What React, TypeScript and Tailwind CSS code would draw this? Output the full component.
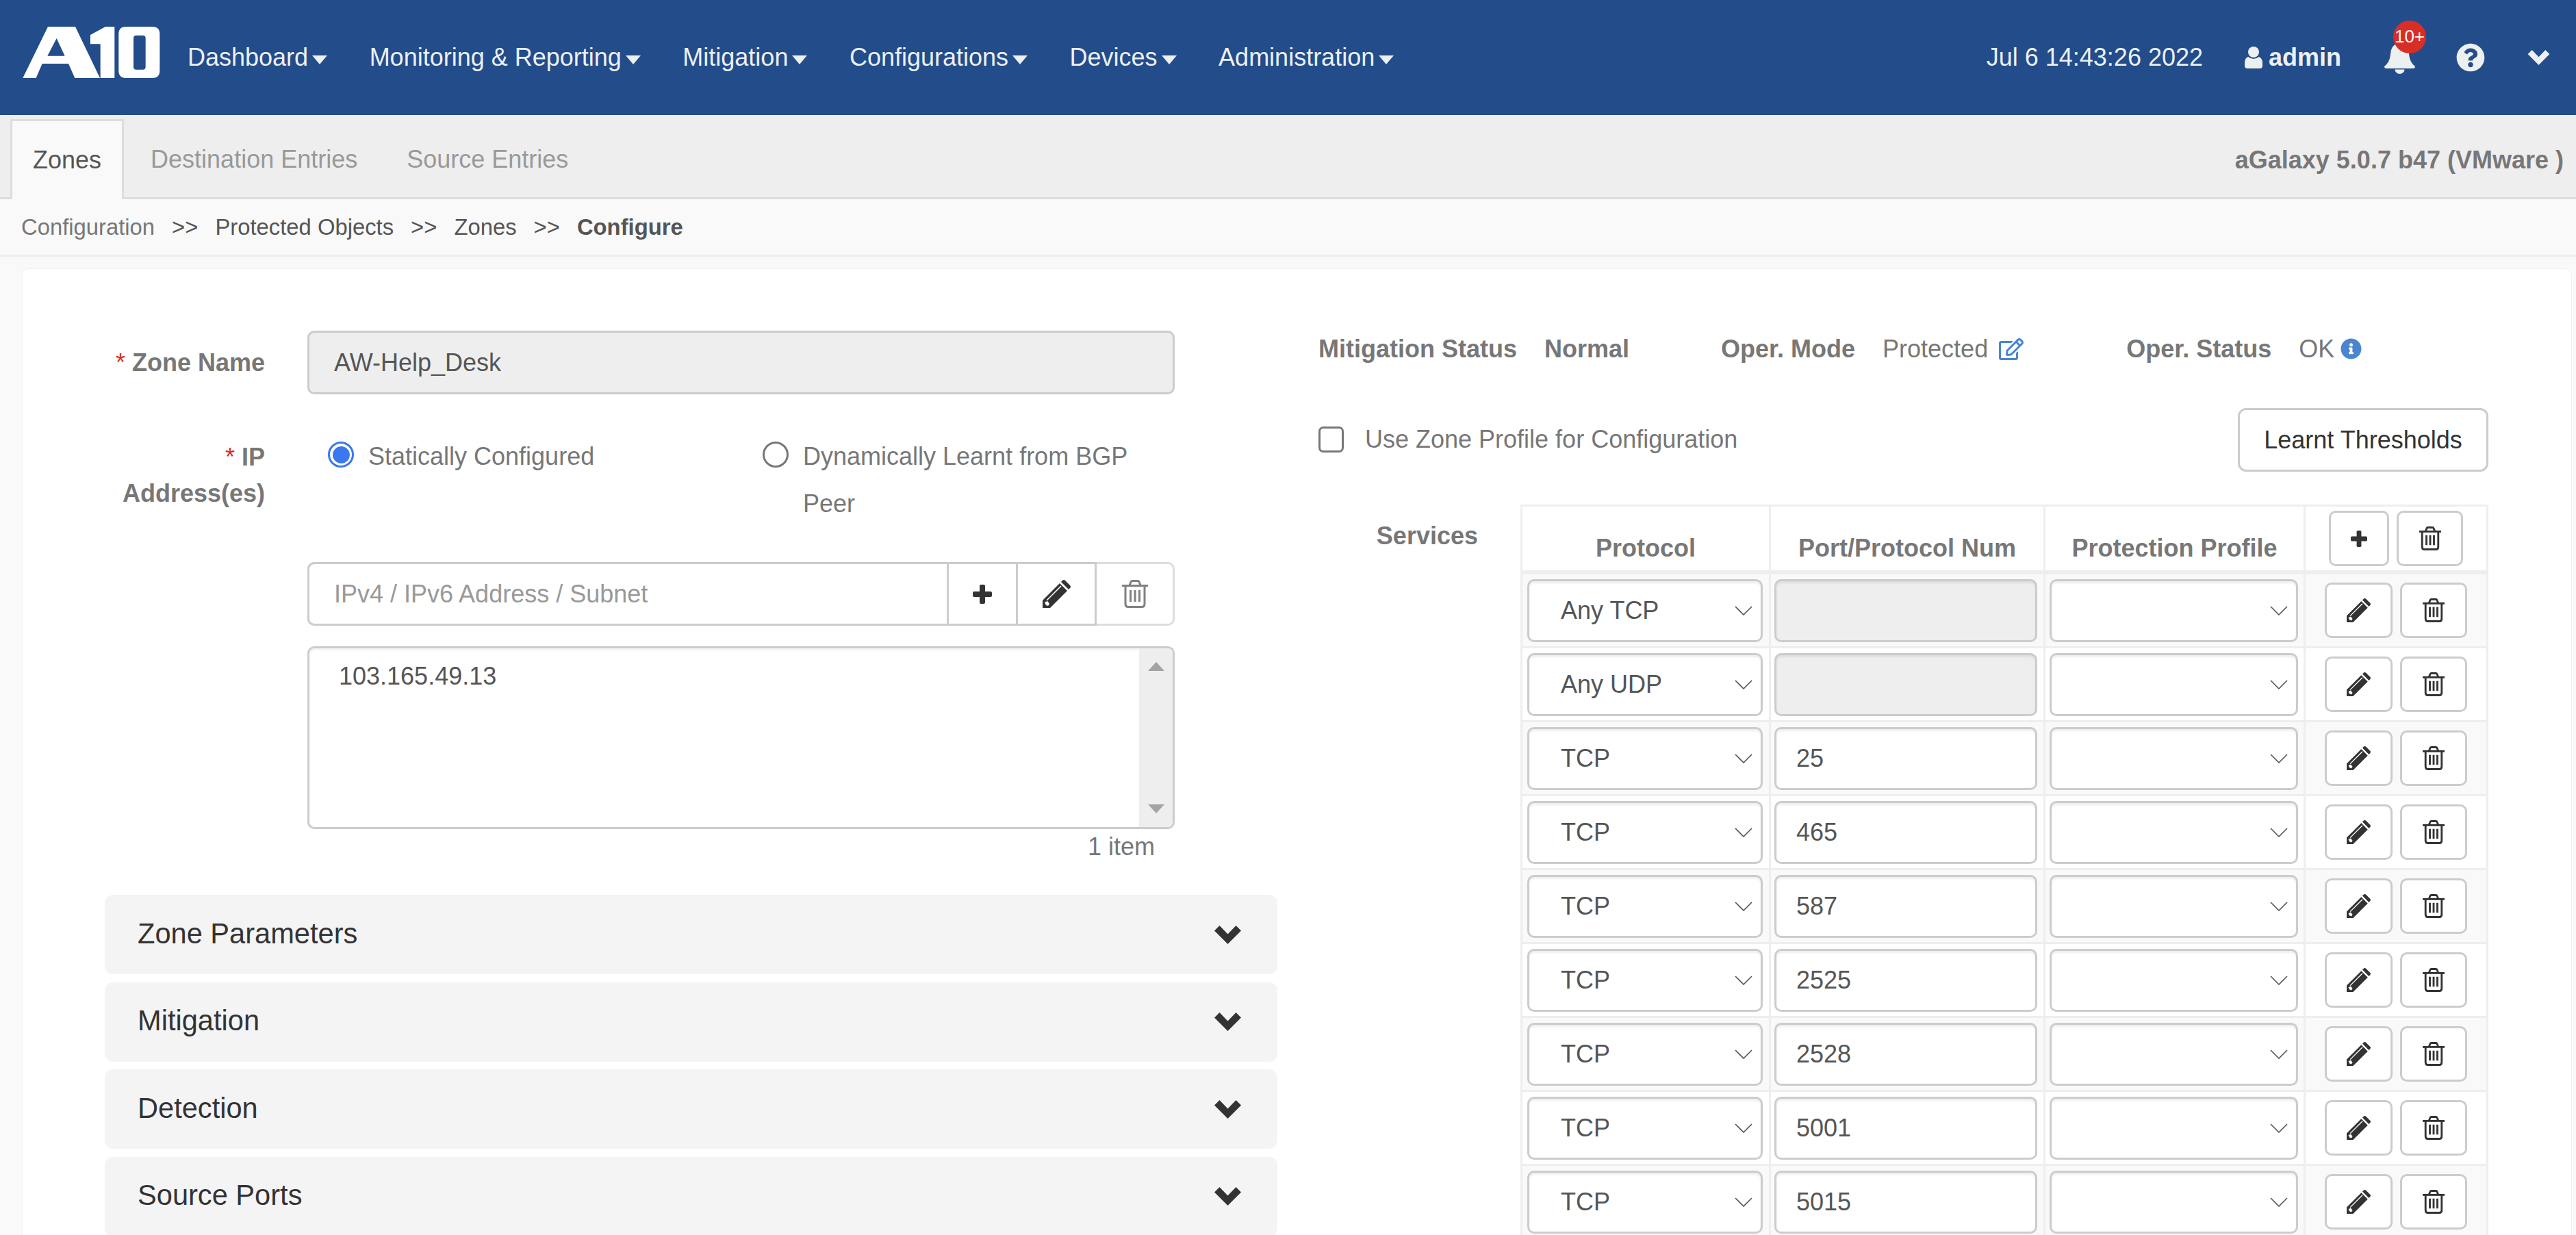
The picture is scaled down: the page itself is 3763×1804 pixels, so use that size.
import { FaInfoCircle, FaQuestionCircle, FaRegEdit } from 'react-icons/fa';

const NAV = ['Dashboard', 'Monitoring & Reporting', 'Mitigation', 'Configurations', 'Devices', 'Administration'];
const ACCORDIONS = ['Zone Parameters', 'Mitigation', 'Detection', 'Source Ports'];
const SERVICES = [
  { proto: 'Any TCP', port: null },
  { proto: 'Any UDP', port: null },
  { proto: 'TCP', port: '25' },
  { proto: 'TCP', port: '465' },
  { proto: 'TCP', port: '587' },
  { proto: 'TCP', port: '2525' },
  { proto: 'TCP', port: '2528' },
  { proto: 'TCP', port: '5001' },
  { proto: 'TCP', port: '5015' },
];

function Logo() {
  return (
    <svg viewBox="0 0 690 300" className="mb-[18px] h-[100px] w-[230px] shrink-0" fill="white">
      <path fillRule="evenodd" d="M40 267 150 42H270L378 267H268L240 204H125L98 267ZM188 93 148 170H224Z" />
      <path d="M336 78 402 42H442V267H380V118H336Z" />
      <path
        fillRule="evenodd"
        d="M492 42H608Q640 42 640 74V235Q640 267 608 267H492Q460 267 460 235V74Q460 42 492 42ZM537 80Q525 80 525 92V218Q525 230 537 230H566Q578 230 578 218V92Q578 80 566 80Z"
      />
    </svg>
  );
}

function UserIcon() {
  return (
    <svg viewBox="0 0 26 32" className="h-[32px] w-[26px]" fill="#ecf0f1">
      <circle cx="13" cy="8" r="8" />
      <path d="M5 15Q9 18 13 18T21 15Q26 17 26 24V28Q26 32 22 32H4Q0 32 0 28V24Q0 17 5 15Z" />
    </svg>
  );
}

function BellIcon() {
  return (
    <svg viewBox="0 0 45 45" className="h-[45px] w-[45px]" fill="#ecf0f1">
      <path d="M22.5 0Q35 1 36 16 37 28 45 34 45 37 42 37H3Q0 37 0 34 8 28 9 16 10 1 22.5 0Z" />
      <path d="M15.5 38.5A7 6.5 0 0 0 29.5 38.5Z" />
    </svg>
  );
}

function HeavyChevron({ className }: { className: string }) {
  return (
    <svg viewBox="0 0 39 27" className={className} fill="currentColor">
      <path d="M0 7.5 7.5 0 19.5 12.5 31.5 0 39 7.5 19.5 27Z" />
    </svg>
  );
}

function PlusIcon({ className }: { className: string }) {
  return (
    <svg viewBox="0 0 28 28" className={className} fill="#333">
      <rect x="10" y="0" width="8" height="28" rx="2" />
      <rect x="0" y="10" width="28" height="8" rx="2" />
    </svg>
  );
}

function PencilIcon({ className }: { className: string }) {
  return (
    <svg viewBox="0 0 41 41" className={className}>
      <path d="M0 30 25 5 36 16 11 41H0Z" fill="#333" />
      <path d="M27 3 29 1Q31-1 33 1L40 8Q42 10 40 12L38 14Z" fill="#333" />
      <path d="M6 30 27 9" stroke="white" strokeWidth="1.6" />
      <path d="M3 33 7 31 10 35 8 38 5 37Z" fill="white" />
    </svg>
  );
}

function TrashIcon({ className, color, stroke = 3 }: { className: string; color: string; stroke?: number }) {
  return (
    <svg viewBox="0 0 38 41" className={className} fill="none" stroke={color} strokeWidth={stroke}>
      <path d="M0 8.5H38" />
      <path d="M11 8 13 3Q13.6 1.5 15 1.5H23Q24.4 1.5 25 3L27 8" />
      <path d="M5 8V35Q5 39.5 9 39.5H29Q33 39.5 33 35V8" />
      <path d="M12.5 15V32M19 15V32M25.5 15V32" />
    </svg>
  );
}

function SelectChevron() {
  return (
    <svg viewBox="0 0 26 14" className="h-[14px] w-[26px]" fill="none" stroke="#555" strokeWidth="1.6">
      <path d="M1 1 13 13 25 1" />
    </svg>
  );
}

function Select({ value, width }: { value?: string; width: string }) {
  return (
    <div
      className={`flex h-[92px] items-center justify-between rounded-[10px] border-[3px] border-[#ccc] bg-white pl-[46px] pr-[12px] text-[36px] text-[#555] shadow-[inset_0_3px_3px_rgba(0,0,0,0.07)] ${width}`}
    >
      <span>{value}</span>
      <SelectChevron />
    </div>
  );
}

function IconButton({ width, children }: { width: string; children: React.ReactNode }) {
  return (
    <div className={`flex h-[81px] items-center justify-center rounded-[10px] border-[3px] border-[#ccc] bg-white ${width}`}>
      {children}
    </div>
  );
}

function ServiceRow({ proto, port, odd }: { proto: string; port: string | null; odd: boolean }) {
  return (
    <div
      className={`grid h-[108px] shrink-0 grid-cols-[363px_401px_380px_1fr] border-b-[3px] border-[#eee] ${odd ? 'bg-[#f9f9f9]' : 'bg-white'}`}
    >
      <div className="flex items-center border-l-[3px] border-[#eee] pl-[7px]">
        <Select value={proto} width="w-[344px]" />
      </div>
      <div className="flex items-center border-l-[3px] border-[#eee] pl-[5px]">
        <div
          className={`flex h-[92px] w-[384px] items-center rounded-[10px] border-[3px] border-[#ccc] pl-[29px] text-[36px] text-[#555] shadow-[inset_0_3px_3px_rgba(0,0,0,0.07)] ${port ? 'bg-white' : 'bg-[#eee]'}`}
        >
          {port}
        </div>
      </div>
      <div className="flex items-center border-l-[3px] border-[#eee] pl-[6px]">
        <Select width="w-[363px]" />
      </div>
      <div className="flex items-center gap-[11px] border-l-[3px] border-[#eee] pl-[28px]">
        <IconButton width="w-[99px]">
          <PencilIcon className="h-[35px] w-[35px]" />
        </IconButton>
        <IconButton width="w-[98px]">
          <TrashIcon className="h-[35px] w-[32px]" color="#333" stroke={3.4} />
        </IconButton>
      </div>
    </div>
  );
}

function Radio({ checked }: { checked?: boolean }) {
  return (
    <div
      className={`flex h-[38px] w-[38px] shrink-0 items-center justify-center rounded-full border-[3px] ${checked ? 'border-[#3b78f0]' : 'border-[#777]'}`}
    >
      {checked && <div className="h-[25px] w-[25px] rounded-full bg-[#3b78f0]" />}
    </div>
  );
}

export default function App() {
  return (
    <div className="flex h-[1804px] flex-col overflow-hidden bg-[#f9f9f9] font-['Liberation_Sans',Arial,sans-serif] text-[36px]">
      <header className="flex h-[168px] shrink-0 items-center bg-[#234c8b] pl-[20px] pr-[38px] text-[#ecf0f1]">
        <Logo />
        <nav className="ml-[24px] flex items-center gap-[61.5px]">
          {NAV.map((item) => (
            <div key={item} className="flex items-center gap-[6px]">
              <span>{item}</span>
              <span className="mt-[6px] h-0 w-0 border-x-[11.5px] border-t-[13px] border-x-transparent border-t-[#ecf0f1]" />
            </div>
          ))}
        </nav>
        <div className="ml-auto flex items-center">
          <span>Jul 6 14:43:26 2022</span>
          <span className="ml-[61px] mr-[9px] flex">
            <UserIcon />
          </span>
          <span className="font-bold">admin</span>
          <div className="relative ml-[63px] mt-[2px]">
            <BellIcon />
            <span className="absolute left-[13px] top-[-33px] flex h-[48px] w-[48px] items-center justify-center rounded-full bg-[#d92d27] text-[26px] text-white">
              10+
            </span>
          </div>
          <FaQuestionCircle className="ml-[60px] h-[42px] w-[42px]" />
          <HeavyChevron className="ml-[62px] h-[22px] w-[33px]" />
        </div>
      </header>

      <div className="flex h-[123px] shrink-0 items-end justify-between border-b-[3px] border-[#ddd] bg-[#eee] pl-[15px] pr-[18px]">
        <div className="flex items-end">
          <div className="relative -mb-[3px] flex h-[117px] items-center border-x-[3px] border-t-[3px] border-[#ddd] bg-[#f9f9f9] px-[30px] text-[#555]">
            <span>Zones</span>
          </div>
          <div className="flex h-[114px] items-center gap-[72px] pl-[39px] pt-[3px] text-[#999]">
            <span>Destination Entries</span>
            <span>Source Entries</span>
          </div>
        </div>
        <div className="flex h-[114px] items-center pt-[6px] font-bold text-[#777]">aGalaxy 5.0.7 b47 (VMware )</div>
      </div>

      <div className="flex h-[84px] shrink-0 items-center gap-[25px] border-b-[3px] border-[#eee] pl-[31px] text-[32.8px] text-[#555]">
        <span className="text-[#777]">Configuration</span>
        <span>&gt;&gt;</span>
        <span>Protected Objects</span>
        <span>&gt;&gt;</span>
        <span>Zones</span>
        <span>&gt;&gt;</span>
        <span className="font-bold">Configure</span>
      </div>

      <main className="ml-[32px] mr-[6px] mt-[17px] flex flex-1 rounded-t-[10px] border border-[#f0f1f5] bg-white pl-[120px]">
        <div className="w-[1713px] shrink-0 pt-[90px]">
          <div className="flex items-center">
            <div className="w-[234px] text-right font-bold text-[#777]">
              <span className="font-normal text-[#d9301f]">*</span> <span>Zone Name</span>
            </div>
            <div className="ml-[62px] flex h-[93px] w-[1267px] items-center rounded-[10px] border-[3px] border-[#ccc] bg-[#eee] pl-[36px] text-[#555]">
              AW-Help_Desk
            </div>
          </div>

          <div className="mt-[56px] flex">
            <div className="mt-[9px] w-[234px] text-right font-bold leading-[53px] text-[#777]">
              <div>
                <span className="font-normal text-[#d9301f]">*</span> <span>IP</span>
              </div>
              <div>Address(es)</div>
            </div>
            <div className="ml-[62px] flex w-[1267px] pl-[30px] leading-[69px] text-[#777]">
              <div className="flex w-[635px] items-start gap-[21px]">
                <div className="mt-[13px]">
                  <Radio checked />
                </div>
                <span>Statically Configured</span>
              </div>
              <div className="flex w-[560px] items-start gap-[21px]">
                <div className="mt-[13px]">
                  <Radio />
                </div>
                <span>Dynamically Learnt from BGP Peer</span>
              </div>
            </div>
          </div>

          <div className="ml-[296px] mt-[51px] flex h-[93px] w-[1267px] rounded-[10px] border-[3px] border-[#ddd] bg-white">
            <div className="-my-[3px] -ml-[3px] flex w-[937px] items-center rounded-l-[10px] border-[3px] border-[#ccc] pl-[36px] text-[#999]">
              IPv4 / IPv6 Address / Subnet
            </div>
            <div className="-my-[3px] flex w-[101px] items-center justify-center border-y-[3px] border-r-[3px] border-[#ccc]">
              <PlusIcon className="h-[28px] w-[28px]" />
            </div>
            <div className="-my-[3px] flex w-[115px] items-center justify-center border-y-[3px] border-r-[3px] border-[#ccc]">
              <PencilIcon className="h-[41px] w-[41px]" />
            </div>
            <div className="flex flex-1 items-center justify-center">
              <TrashIcon className="h-[41px] w-[38px]" color="#808080" />
            </div>
          </div>

          <div className="ml-[296px] mt-[30px] flex h-[267px] w-[1267px] overflow-hidden rounded-[10px] border-[3px] border-[#ccc] bg-white shadow-[inset_0_3px_3px_rgba(0,0,0,0.05)]">
            <div className="flex-1 pl-[43px] pt-[14px] text-[#555]">103.165.49.13</div>
            <div className="flex w-[49px] flex-col items-center justify-between bg-[#eee] pb-[20px] pt-[20px]">
              <span className="h-0 w-0 border-x-[12px] border-b-[13px] border-x-transparent border-b-[#a3a3a3]" />
              <span className="h-0 w-0 border-x-[12px] border-t-[13px] border-x-transparent border-t-[#a3a3a3]" />
            </div>
          </div>
          <div className="ml-[296px] mt-[6px] w-[1238px] text-right leading-[40px] text-[#777]">1 item</div>

          <div className="mt-[50px] flex flex-col gap-[11.5px]">
            {ACCORDIONS.map((title) => (
              <div
                key={title}
                className="flex h-[116px] shrink-0 items-center justify-between rounded-[12px] bg-[#f4f4f5] pl-[48px] pr-[53px] text-[41.6px] text-[#333]"
              >
                <span className="mb-[2px]">{title}</span>
                <HeavyChevron className="h-[27px] w-[39px]" />
              </div>
            ))}
          </div>
        </div>

        <div className="ml-[60px] w-[1709px] shrink-0 pt-[90px]">
          <div className="flex items-center leading-[53px]">
            <span className="font-bold text-[#777]">Mitigation Status</span>
            <span className="ml-[40px] font-bold text-[#777]">Normal</span>
            <span className="ml-[134px] font-bold text-[#777]">Oper. Mode</span>
            <span className="ml-[40px] text-[#777]">Protected</span>
            <FaRegEdit className="ml-[16px] h-[32px] w-[36px] text-[#4a86cf]" />
            <span className="ml-[150px] font-bold text-[#777]">Oper. Status</span>
            <span className="ml-[40px] text-[#777]">OK</span>
            <FaInfoCircle className="ml-[9px] h-[31px] w-[31px] text-[#4a86cf]" />
          </div>

          <div className="mt-[60px] flex h-[93px] items-center justify-between">
            <div className="mb-[2px] flex items-center gap-[31px] text-[#777]">
              <div className="h-[38px] w-[37px] rounded-[7px] border-[3px] border-[#777]" />
              <span>Use Zone Profile for Configuration</span>
            </div>
            <div className="flex h-[93px] w-[366px] items-center justify-center rounded-[12px] border-[3px] border-[#ccc] text-[#333]">
              Learnt Thresholds
            </div>
          </div>

          <div className="mt-[48px] flex">
            <div className="mr-[62px] w-[233px] pt-[19px] text-right font-bold leading-[53px] text-[#777]">Services</div>
            <div className="w-[1414px] border-r-[3px] border-t-[3px] border-[#eee]">
              <div className="grid h-[99px] grid-cols-[363px_401px_380px_1fr] border-b-[6px] border-[#eee] font-bold text-[#777]">
                <div className="flex items-center justify-center border-l-[3px] border-[#eee] pt-[29px]">Protocol</div>
                <div className="flex items-center justify-center border-l-[3px] border-[#eee] pt-[29px]">Port/Protocol Num</div>
                <div className="flex items-center justify-center border-l-[3px] border-[#eee] pt-[29px]">Protection Profile</div>
                <div className="flex items-center gap-[11px] border-l-[3px] border-[#eee] pl-[34px]">
                  <IconButton width="w-[88px]">
                    <PlusIcon className="h-[24px] w-[24px]" />
                  </IconButton>
                  <IconButton width="w-[97px]">
                    <TrashIcon className="h-[35px] w-[32px]" color="#333" stroke={3.4} />
                  </IconButton>
                </div>
              </div>
              {SERVICES.map((s, i) => (
                <ServiceRow key={i} proto={s.proto} port={s.port} odd={i % 2 === 0} />
              ))}
            </div>
          </div>
        </div>
      </main>
    </div>
  );
}
